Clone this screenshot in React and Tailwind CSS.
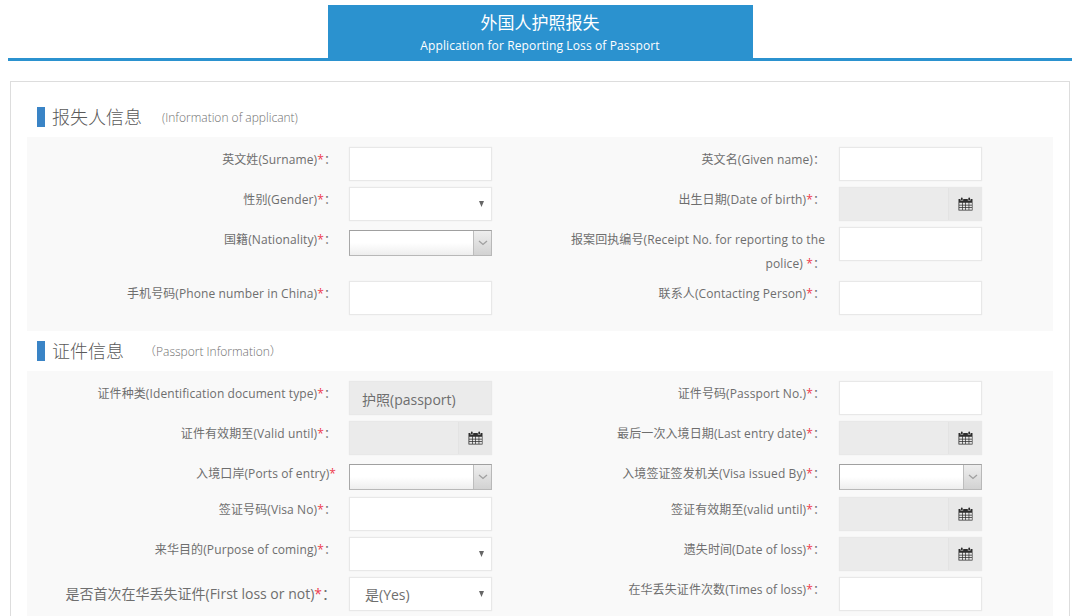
const FONT = "font-['Open_Sans','Noto_Sans_CJK_SC',sans-serif]";

function CalendarIcon() {
  return (
    <svg width="15" height="14" viewBox="0 0 15 14" aria-hidden="true">
      <path d="M0.5 2H2.4V3.6H5.2V2H9.8V3.6H12.6V2H14.5V5H0.5Z" fill="#2e2e2e" />
      <path d="M2.9 3V1.4a0.9 0.9 0 0 1 1.8 0V3ZM10.3 3V1.4a0.9 0.9 0 0 1 1.8 0V3Z" fill="#2e2e2e" />
      <path
        d="M0.5 5h14v8.5H0.5ZM1.3 5.8v1.9h2.7V5.8Zm3.4 0v1.9h2.6V5.8Zm3.3 0v1.9h2.6V5.8Zm3.3 0v1.9h2.6V5.8ZM1.3 8.4v1.8h2.7V8.4Zm3.4 0v1.8h2.6V8.4Zm3.3 0v1.8h2.6V8.4Zm3.3 0v1.8h2.6V8.4ZM1.3 10.9v1.8h2.7v-1.8Zm3.4 0v1.8h2.6v-1.8Zm3.3 0v1.8h2.6v-1.8Zm3.3 0v1.8h2.6v-1.8Z"
        fill="#2e2e2e"
        fillRule="evenodd"
      />
    </svg>
  );
}

function Caret() {
  return (
    <svg width="5" height="6" viewBox="0 0 5 6" aria-hidden="true">
      <path d="M0 0h5L2.5 6Z" fill="#666" />
    </svg>
  );
}

const boxBase = "w-[143px] h-[34px] border border-[#e8e8e8] shadow-[0_0_1px_rgba(0,0,0,0.08)]";

function TextBox() {
  return <input type="text" className={`${boxBase} bg-white block outline-none`} />;
}

function PlainSelect({ value }) {
  return (
    <div className={`${boxBase} bg-white flex items-center justify-between pl-[15px] pr-[7px] text-[14px] text-[#6e6e6e]`}>
      <span>{value}</span>
      <Caret />
    </div>
  );
}

function DateBox() {
  return (
    <div className={`${boxBase} bg-[#ebebeb] flex justify-end`}>
      <div className="w-[33px] bg-[#e8e8e8] border-l border-[#e3e3e3] flex items-center justify-center">
        <CalendarIcon />
      </div>
    </div>
  );
}

function ComboBox() {
  return (
    <div className="mt-[3px] mb-[7px] w-[143px] h-[26px] flex border border-[#b8b8b8] border-t-[#a0a0a0] border-l-[#a8a8a8] bg-gradient-to-b from-white from-50% to-[#eeeeee]">
      <div className="flex-1" />
      <div className="w-[18px] border-l border-[#bdbdbd] bg-gradient-to-b from-[#eeeeee] to-[#d2d2d2] flex items-center justify-center">
        <svg width="10" height="6" viewBox="0 0 10 6" aria-hidden="true">
          <path d="M1 1l4 3.5L9 1" fill="none" stroke="#a0a0a0" strokeWidth="1.3" />
        </svg>
      </div>
    </div>
  );
}

function ReadonlyBox({ value }) {
  return (
    <div className={`${boxBase} bg-[#ebebeb] flex items-center pl-[12px] pt-[2px] text-[14px] text-[#6e6e6e]`}>{value}</div>
  );
}

function Label({ text, star = "*", colon = true, side, big, star2 }) {
  return (
    <div
      className={`text-right leading-[24px] text-[#6e6e6e] ${
        big ? "text-[14px] pt-[5px]" : "text-[12px] pt-[1px] tracking-[0.1px]"
      } ${side === "right" ? "pl-[70px] pr-[14px]" : "pr-[13px]"}`}
    >
      {text}
      {star2 ? " " : ""}
      {star && <span className="text-[#ee3b4f]">{star}</span>}
      {colon && "："}
    </div>
  );
}

function Heading({ title, sub, gap }) {
  return (
    <div className="h-[40px] flex items-center">
      <div className="ml-[26px] w-[8px] h-[20px] bg-[#3a84c6]" />
      <span className="ml-[7px] text-[18px] leading-[20px] font-light text-[#5a5a5a]">{title}</span>
      <span className={`${gap} pt-[2px] text-[12px] font-light text-[#707070]`}>{sub}</span>
    </div>
  );
}

const FormGrid = ({ children, cls }) => (
  <div className={`mx-[16px] pt-[10px] bg-[#f9f9f9] grid grid-cols-[322px_143px_347px_143px] ${cls}`}>{children}</div>
);

export default function App() {
  return (
    <div className={`${FONT} h-[616px] overflow-hidden bg-white`}>
      <div className="pt-[5px] px-[8px]">
        <div className="border-b-[3px] border-[#2b92cf] h-[56px] flex justify-center">
          <div className="w-[425px] h-[56px] bg-[#2b92cf] text-white text-center">
            <div className="text-[17px] leading-[20px] pt-[8px]">外国人护照报失</div>
            <div className="text-[12px] tracking-[0.12px] leading-[16px] mt-[5px]">Application for Reporting Loss of Passport</div>
          </div>
        </div>
      </div>

      <div className="mt-[20px] mx-[10px] pt-[15px] border border-[#dddddd]">
        <Heading title="报失人信息" sub="(Information of applicant)" gap="ml-[20px]" />
        <FormGrid cls="pb-[16px]">
          <Label text="英文姓(Surname)" />
          <div className="h-[40px]"><TextBox /></div>
          <Label text="英文名(Given name)" star="" side="right" />
          <div className="h-[40px]"><TextBox /></div>

          <Label text="性别(Gender)" />
          <div className="h-[40px]"><PlainSelect /></div>
          <Label text="出生日期(Date of birth)" side="right" />
          <div className="h-[40px]"><DateBox /></div>

          <Label text="国籍(Nationality)" />
          <div className="h-[54px]"><ComboBox /></div>
          <Label text="报案回执编号(Receipt No. for reporting to the police)" star2 side="right" />
          <div className="h-[54px]"><TextBox /></div>

          <Label text="手机号码(Phone number in China)" />
          <div className="h-[34px]"><TextBox /></div>
          <Label text="联系人(Contacting Person)" side="right" />
          <div className="h-[34px]"><TextBox /></div>
        </FormGrid>

        <Heading title="证件信息" sub="（Passport Information）" gap="ml-[20px]" />
        <FormGrid cls="pb-[24px]">
          <Label text="证件种类(Identification document type)" />
          <div className="h-[40px]"><ReadonlyBox value="护照(passport)" /></div>
          <Label text="证件号码(Passport No.)" side="right" />
          <div className="h-[40px]"><TextBox /></div>

          <Label text="证件有效期至(Valid until)" />
          <div className="h-[40px]"><DateBox /></div>
          <Label text="最后一次入境日期(Last entry date)" side="right" />
          <div className="h-[40px]"><DateBox /></div>

          <Label text="入境口岸(Ports of entry)" colon={false} />
          <div className="h-[36px]"><ComboBox /></div>
          <Label text="入境签证签发机关(Visa issued By)" side="right" />
          <div className="h-[36px]"><ComboBox /></div>

          <Label text="签证号码(Visa No)" />
          <div className="h-[40px]"><TextBox /></div>
          <Label text="签证有效期至(valid until)" side="right" />
          <div className="h-[40px]"><DateBox /></div>

          <Label text="来华目的(Purpose of coming)" />
          <div className="h-[40px]"><PlainSelect /></div>
          <Label text="遗失时间(Date of loss)" side="right" />
          <div className="h-[40px]"><DateBox /></div>

          <Label text="是否首次在华丢失证件(First loss or not)" big />
          <div className="h-[34px]"><PlainSelect value="是(Yes)" /></div>
          <Label text="在华丢失证件次数(Times of loss)" side="right" />
          <div className="h-[34px]"><TextBox /></div>
        </FormGrid>
      </div>
    </div>
  );
}
